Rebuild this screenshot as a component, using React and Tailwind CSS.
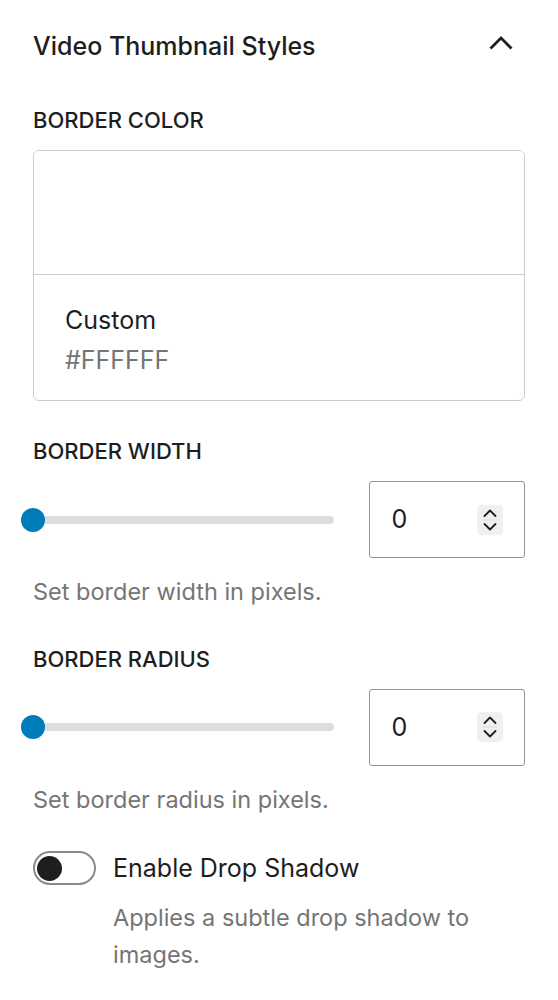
import React from 'react'

const font = { fontFamily: 'Inter, "Noto Sans", sans-serif' }

function Spinner() {
  return (
    <div className="flex h-[30px] w-[26px] flex-col items-center justify-center rounded-[5px] bg-[#f0f0f0]">
      <svg width="18" height="26" viewBox="0 0 18 26" fill="none" stroke="#1e1e1e" strokeWidth="1.8" strokeLinecap="round" strokeLinejoin="round">
        <path d="M3.5 9 L9 3.5 L14.5 9" />
        <path d="M2 13 H16" stroke="#dcdcdc" strokeWidth="1" />
        <path d="M3.5 17 L9 22.5 L14.5 17" />
      </svg>
    </div>
  )
}

function RangeRow({ label, help }) {
  return (
    <div className="flex flex-col">
      <div className="text-[22px] font-medium uppercase leading-none text-[#1e1e1e]">{label}</div>
      <div className="mt-[19px] flex items-center">
        <div className="relative flex h-[24px] w-[302px] items-center">
          <div className="ml-[10px] h-[8px] flex-1 rounded-full bg-[#dddddd]" />
          <div className="absolute left-[-12px] top-0 h-[24px] w-[24px] rounded-full bg-[#007cba]" />
        </div>
        <div className="ml-[35px] flex h-[77px] w-[157px] items-center justify-between rounded-[3px] border-[1.5px] border-[#949494] pl-[22px] pr-[21px]">
          <span className="text-[25px] leading-none text-[#1e1e1e]">0</span>
          <Spinner />
        </div>
      </div>
      <div className="mt-[22px] text-[23.5px] leading-none text-[#757575]">{help}</div>
    </div>
  )
}

export default function App() {
  return (
    <div className="min-h-screen w-[558px] bg-white px-[33px]" style={font}>
      {/* header */}
      <div className="flex items-center justify-between pt-[34px]">
        <h2 className="text-[25px] font-medium leading-none text-[#1e1e1e]">Video Thumbnail Styles</h2>
        <svg width="24" height="14" viewBox="0 0 24 14" fill="none" stroke="#1e1e1e" strokeWidth="2.8" className="mb-[8px] mr-[12px]">
          <path d="M1.5 12.5 L12 2 L22.5 12.5" />
        </svg>
      </div>

      {/* border color */}
      <div className="mt-[50px] text-[22px] font-medium uppercase leading-none text-[#1e1e1e]">Border Color</div>
      <div className="mt-[19px] overflow-hidden rounded-[6px] border-[1.5px] border-[#cccccc]">
        <div className="h-[124px] border-b-[1.5px] border-[#cccccc] bg-white" />
        <div className="flex flex-col px-[31px] pb-[27px] pt-[33px]">
          <span className="text-[25px] leading-none text-[#1e1e1e]">Custom</span>
          <span className="mt-[15px] text-[25px] leading-none text-[#757575]">#FFFFFF</span>
        </div>
      </div>

      <div className="mt-[39px] flex flex-col gap-[44px]">
        <RangeRow label="Border Width" help="Set border width in pixels." />
        <RangeRow label="Border Radius" help="Set border radius in pixels." />
      </div>

      {/* toggle */}
      <div className="mt-[40px] flex items-start">
        <div className="flex h-[34px] w-[63px] shrink-0 items-center rounded-full border-[2px] border-[#8a8a8a] bg-white pl-[2px]">
          <div className="h-[25px] w-[25px] rounded-full bg-[#1e1e1e]" />
        </div>
        <div className="ml-[17px] flex flex-col">
          <span className="mt-[5px] text-[25px] leading-none text-[#1e1e1e]">Enable Drop Shadow</span>
          <span className="mt-[18px] text-[23.5px] leading-[37px] text-[#757575]">
            Applies a subtle drop shadow to
            <br />
            images.
          </span>
        </div>
      </div>
    </div>
  )
}
